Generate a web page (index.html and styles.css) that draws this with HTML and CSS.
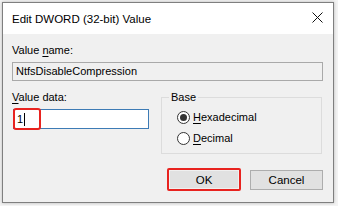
FILE: index.html
```html
<!DOCTYPE html>
<html lang="en">
<head>
    <meta charset="UTF-8">
    <title>Edit DWORD (32-bit) Value</title>
    <link rel="stylesheet" href="styles.css">
</head>
<body>
    <div class="window">
        <div class="titlebar">
            <span class="title">Edit DWORD (32-bit) Value</span>
            <svg class="close" width="11" height="11" viewBox="0 0 11 11">
                <path d="M0.5 0.5 L10.5 10.5 M10.5 0.5 L0.5 10.5" stroke="#111" stroke-width="1"/>
            </svg>
        </div>
        <div class="content">
            <div class="label">Value <u>n</u>ame:</div>
            <div class="field readonly">NtfsDisableCompression</div>

            <div class="row">
                <div class="data-col">
                    <div class="label"><u>V</u>alue data:</div>
                    <div class="field input">
                        <span>1</span><span class="caret"></span>
                        <div class="mark mark-input"></div>
                    </div>
                </div>
                <fieldset class="group">
                    <legend>Base</legend>
                    <div class="radio-row">
                        <span class="radio checked"></span>
                        <span><u>H</u>exadecimal</span>
                    </div>
                    <div class="radio-row">
                        <span class="radio"></span>
                        <span><u>D</u>ecimal</span>
                    </div>
                </fieldset>
            </div>

            <div class="buttons">
                <div class="ok-wrap">
                    <button class="btn">OK</button>
                </div>
                <button class="btn">Cancel</button>
            </div>
        </div>
    </div>
</body>
</html>
```

FILE: styles.css
```css
body {
    margin: 0;
    background-color: #f3f3f3;
    font-family: "Liberation Sans", Arial, sans-serif;
    font-size: 11px;
    color: #000;
}
.window {
    margin: 2px;
    width: 332px;
    height: 201px;
    box-sizing: border-box;
    border: 1px solid #7f7f7f;
    background-color: #f0f0f0;
    box-shadow: 0 0 3px rgba(0, 0, 0, 0.25);
    display: flex;
    flex-direction: column;
}
.titlebar {
    height: 31px;
    background-color: #fff;
    display: flex;
    align-items: center;
    justify-content: space-between;
    padding: 0 10px 0 9px;
    flex-shrink: 0;
}
.title {
    font-size: 11.5px;
}
.close {
    display: block;
    margin-top: -2px;
}
.content {
    padding: 9px 10px 0 9px;
}
.label {
    line-height: 15px;
    height: 15px;
}
u {
    text-decoration-thickness: 1px;
    text-underline-offset: 2px;
}
.field {
    margin-top: 4px;
    box-sizing: border-box;
    border: 1px solid #a9a9a9;
    line-height: 17px;
    padding: 0 3px;
}
.readonly {
    height: 19px;
    background-color: #f0f0f0;
}
.row {
    display: flex;
    margin-top: 9px;
}
.data-col {
    width: 137px;
}
.input {
    position: relative;
    height: 20px;
    margin-left: 1px;
    background-color: #fff;
    border-color: #3d7bb5;
    line-height: 18px;
    display: flex;
    align-items: center;
}
.caret {
    display: inline-block;
    width: 1px;
    height: 13px;
    background-color: #000;
    margin-left: 1px;
}
.mark {
    position: absolute;
    border: 2px solid #e8231f;
    border-radius: 3px;
    box-sizing: border-box;
}
.mark-input {
    left: -1px;
    top: -2px;
    width: 28px;
    height: 22px;
}
.group {
    margin: 0 0 0 12px;
    width: 161px;
    box-sizing: border-box;
    border: 1px solid #dcdcdc;
    padding: 2px 0 4px 15px;
    min-width: 0;
}
.group legend {
    padding: 0 2px;
    margin-left: -8px;
    line-height: 15px;
}
.radio-row {
    height: 20px;
    display: flex;
    align-items: center;
    margin-bottom: 1px;
}
.radio {
    width: 13px;
    height: 13px;
    box-sizing: border-box;
    border: 1px solid #333;
    border-radius: 50%;
    background-color: #fff;
    margin-right: 3px;
    position: relative;
}
.radio.checked::after {
    content: "";
    position: absolute;
    left: 2px;
    top: 2px;
    width: 7px;
    height: 7px;
    border-radius: 50%;
    background-color: #333;
}
.buttons {
    display: flex;
    justify-content: flex-end;
    align-items: center;
    margin-top: 14px;
}
.ok-wrap {
    border: 2px solid #e8231f;
    border-radius: 2px;
    padding: 1px;
    margin-right: 9px;
}
.btn {
    width: 73px;
    height: 20px;
    box-sizing: border-box;
    background-color: #e1e1e1;
    border: 1px solid #adadad;
    font-family: "Liberation Sans", Arial, sans-serif;
    font-size: 11.5px;
    padding: 0;
    color: #000;
}
.ok-wrap .btn {
    width: 68px;
    height: 17px;
    border: none;
}
```
